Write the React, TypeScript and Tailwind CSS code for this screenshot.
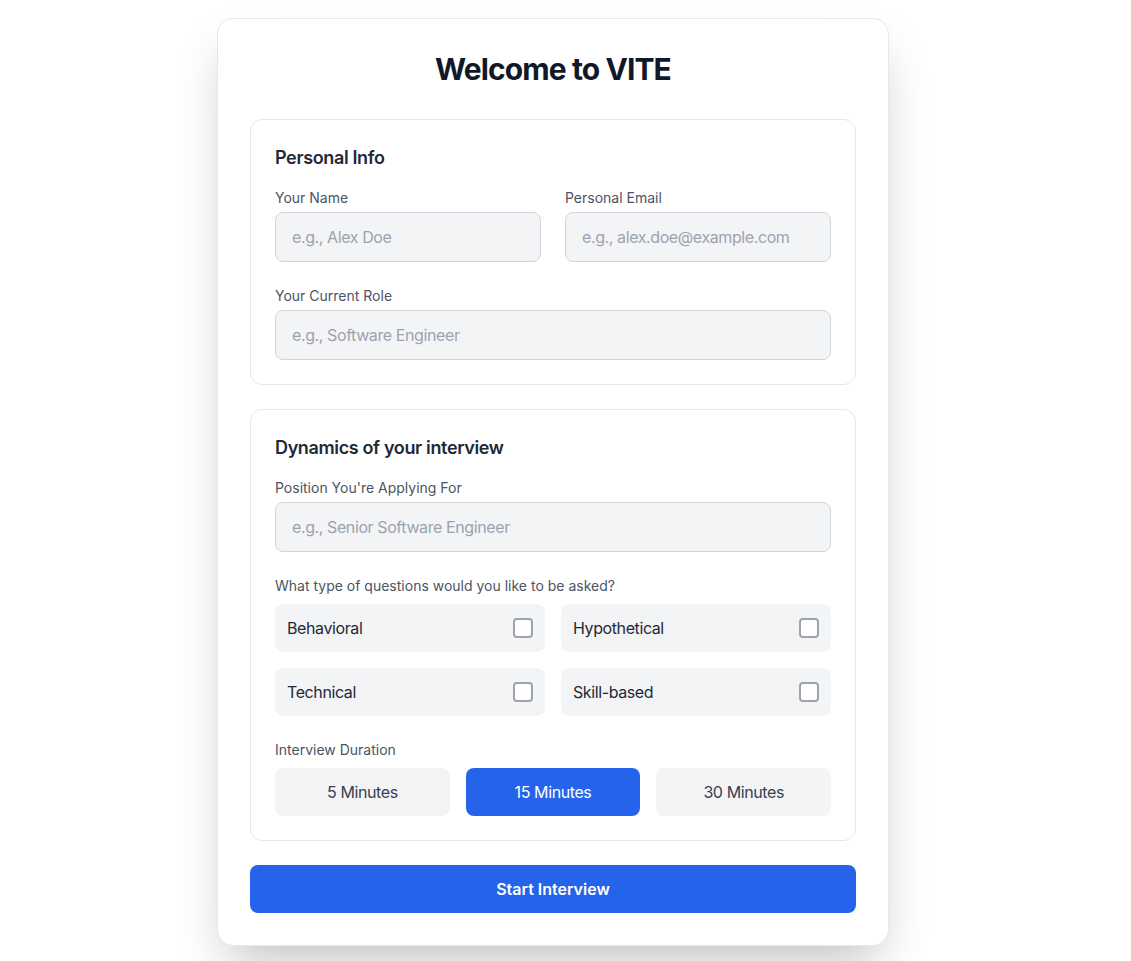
import { useState } from "react";

const questionTypes = ["Behavioral", "Hypothetical", "Technical", "Skill-based"];
const durations = ["5 Minutes", "15 Minutes", "30 Minutes"];

type FieldProps = {
    label: string
    placeholder: string
    type?: string
}

const Field = ({ label, placeholder, type = "text" }: FieldProps) => {
    return (
        <div className="flex flex-col">
            <label className="text-sm text-[#4b5563] mb-1">{label}</label>
            <input
                type={type}
                placeholder={placeholder}
                className="w-full px-4 py-3 text-base tracking-[-0.025em] bg-[#f3f4f6] border border-[#d1d5db] rounded-lg text-[#1f2937] placeholder:text-[#9ca3af] outline-none"
            />
        </div>
    );
};

const App = () => {
    const [selected, setSelected] = useState<string[]>([]);
    const [duration, setDuration] = useState("15 Minutes");

    const toggle = (t: string) => {
        setSelected(prev => prev.includes(t) ? prev.filter(x => x !== t) : [...prev, t]);
    };

    return (
        <div className="min-h-screen bg-white flex items-center justify-center pr-[25px] pt-[2px] font-['Inter',sans-serif]">
            <div className="w-[672px] bg-white border border-[#e5e7eb] rounded-2xl shadow-2xl p-8">
                <h1 className="text-3xl font-bold text-[#111827] text-center tracking-[-0.03em] mb-8">Welcome to VITE</h1>

                <div className="space-y-6">
                    <section className="border border-[#e5e7eb] rounded-xl p-6">
                        <h2 className="text-lg font-semibold text-[#1f2937] tracking-[-0.02em] mb-4">Personal Info</h2>
                        <div className="grid grid-cols-2 gap-6">
                            <Field label="Your Name" placeholder="e.g., Alex Doe" />
                            <Field label="Personal Email" placeholder="e.g., alex.doe@example.com" type="email" />
                            <div className="col-span-2">
                                <Field label="Your Current Role" placeholder="e.g., Software Engineer" />
                            </div>
                        </div>
                    </section>

                    <section className="border border-[#e5e7eb] rounded-xl p-6">
                        <h2 className="text-lg font-semibold text-[#1f2937] tracking-[-0.02em] mb-4">Dynamics of your interview</h2>
                        <div className="space-y-6">
                            <Field label="Position You're Applying For" placeholder="e.g., Senior Software Engineer" />

                            <div>
                                <p className="text-sm text-[#4b5563]">What type of questions would you like to be asked?</p>
                                <div className="grid grid-cols-2 gap-4 mt-2">
                                    {questionTypes.map(t => (
                                        <label key={t} className="flex items-center justify-between h-12 px-3 bg-[#f3f4f6] rounded-lg cursor-pointer">
                                            <span className="text-base text-[#1f2937] tracking-[-0.025em]">{t}</span>
                                            <input
                                                type="checkbox"
                                                checked={selected.includes(t)}
                                                onChange={() => toggle(t)}
                                                className="appearance-none w-5 h-5 border-2 border-[#9ca3af] rounded bg-white checked:bg-[#2563eb] checked:border-[#2563eb]"
                                            />
                                        </label>
                                    ))}
                                </div>
                            </div>

                            <div>
                                <p className="text-sm text-[#4b5563]">Interview Duration</p>
                                <div className="grid grid-cols-3 gap-4 mt-2">
                                    {durations.map(d => (
                                        <button
                                            key={d}
                                            onClick={() => setDuration(d)}
                                            className={d === duration
                                                ? "h-12 rounded-lg bg-[#2563eb] text-white text-base tracking-[-0.025em]"
                                                : "h-12 rounded-lg bg-[#f3f4f6] text-[#374151] text-base tracking-[-0.025em]"}
                                        >
                                            {d}
                                        </button>
                                    ))}
                                </div>
                            </div>
                        </div>
                    </section>

                    <button className="w-full h-12 rounded-lg bg-[#2563eb] text-white text-base font-semibold">
                        Start Interview
                    </button>
                </div>
            </div>
        </div>
    );
};

export default App;
